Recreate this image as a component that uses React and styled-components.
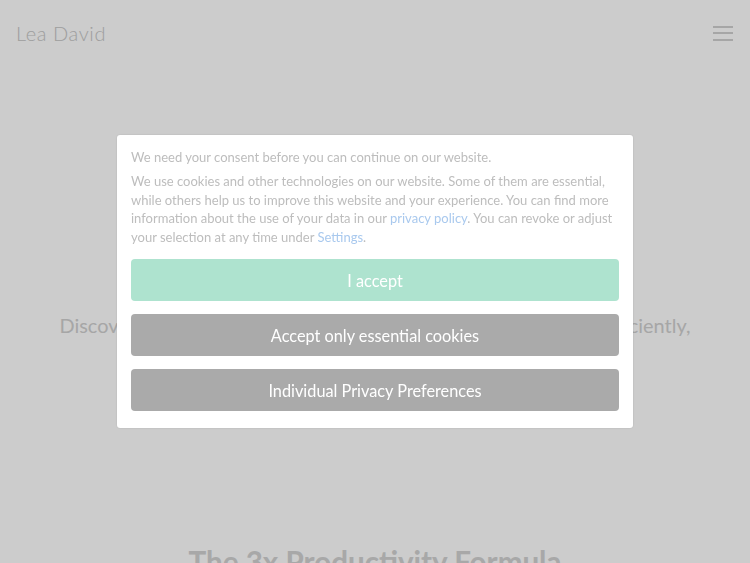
import React from "react";
import styled, { createGlobalStyle } from "styled-components";

const GlobalStyle = createGlobalStyle`
  html, body {
    margin: 0;
    padding: 0;
    background: #ffffff;
    font-family: Lato, "Open Sans", sans-serif;
  }
  * { box-sizing: border-box; }
`;

const Page = styled.div`
  height: 563px;
  display: flex;
  flex-direction: column;
  overflow: hidden;
`;
const Header = styled.header`
  flex-shrink: 0;
  height: 66px;
  display: flex;
  align-items: center;
  justify-content: space-between;
  padding: 0 16px;
`;
const Logo = styled.div`
  font-size: 20px;
  font-weight: 300;
  color: #c6c6c6;
  letter-spacing: 0.6px;
`;
const Burger = styled.button`
  width: 20px;
  height: 15px;
  padding: 0;
  border: 0;
  background: none;
  display: flex;
  flex-direction: column;
  justify-content: space-between;
  margin-right: 1px;
  span {
    display: block;
    height: 2px;
    background: #d0d0d0;
  }
`;
const Hero = styled.section`
  flex-shrink: 0;
  padding: 244px 0 0;
  text-align: center;
  white-space: nowrap;
  font-size: 19.9px;
  line-height: 30px;
  color: #d0d0d0;
`;
const Heading = styled.h2`
  flex-shrink: 0;
  margin: 204px 0 0;
  text-align: center;
  font-size: 29.6px;
  font-weight: 700;
  color: #d2d2d2;
`;

const Overlay = styled.div`
  position: fixed;
  inset: 0;
  background: rgba(0, 0, 0, 0.2);
  display: flex;
  justify-content: center;
  align-items: flex-start;
  padding-top: 135px;
`;
const Modal = styled.div`
  width: 516px;
  background: #ffffff;
  border-radius: 3px;
  box-shadow: 0 0 2px rgba(0, 0, 0, 0.15);
  padding: 12px 14px 17px;
  display: flex;
  flex-direction: column;
`;
const Lead = styled.p`
  margin: 0 0 5px;
  font-size: 13px;
  line-height: 20px;
  color: #bdbdbd;
`;
const Text = styled.p`
  margin: 0 0 13px;
  font-size: 13px;
  line-height: 18.5px;
  color: #bdbdbd;
  a {
    color: #a9c9ee;
    text-decoration: none;
  }
`;
const Buttons = styled.div`
  display: flex;
  flex-direction: column;
  gap: 13px;
`;
const Button = styled.button`
  height: 42px;
  border: 0;
  border-radius: 4px;
  background: ${(p) => (p.$primary ? "#aee3cf" : "#aaaaaa")};
  color: #ffffff;
  font-family: Lato, "Open Sans", sans-serif;
  font-size: 16.3px;
  cursor: pointer;
`;

export default function App() {
  return (
    <>
      <GlobalStyle />
      <Page>
        <Header>
          <Logo>Lea David</Logo>
          <Burger aria-label="Menu">
            <span />
            <span />
            <span />
          </Burger>
        </Header>
        <Hero>
          Discover how to get more done in less time and to work more efficiently,
        </Hero>
        <Heading>The 3x Productivity Formula</Heading>
      </Page>
      <Overlay>
        <Modal>
          <Lead>We need your consent before you can continue on our website.</Lead>
          <Text>
            We use cookies and other technologies on our website. Some of them are essential,
            while others help us to improve this website and your experience. You can find more
            information about the use of your data in our <a href="#">privacy policy</a>. You can
            revoke or adjust your selection at any time under <a href="#">Settings</a>.
          </Text>
          <Buttons>
            <Button $primary>I accept</Button>
            <Button>Accept only essential cookies</Button>
            <Button>Individual Privacy Preferences</Button>
          </Buttons>
        </Modal>
      </Overlay>
    </>
  );
}
